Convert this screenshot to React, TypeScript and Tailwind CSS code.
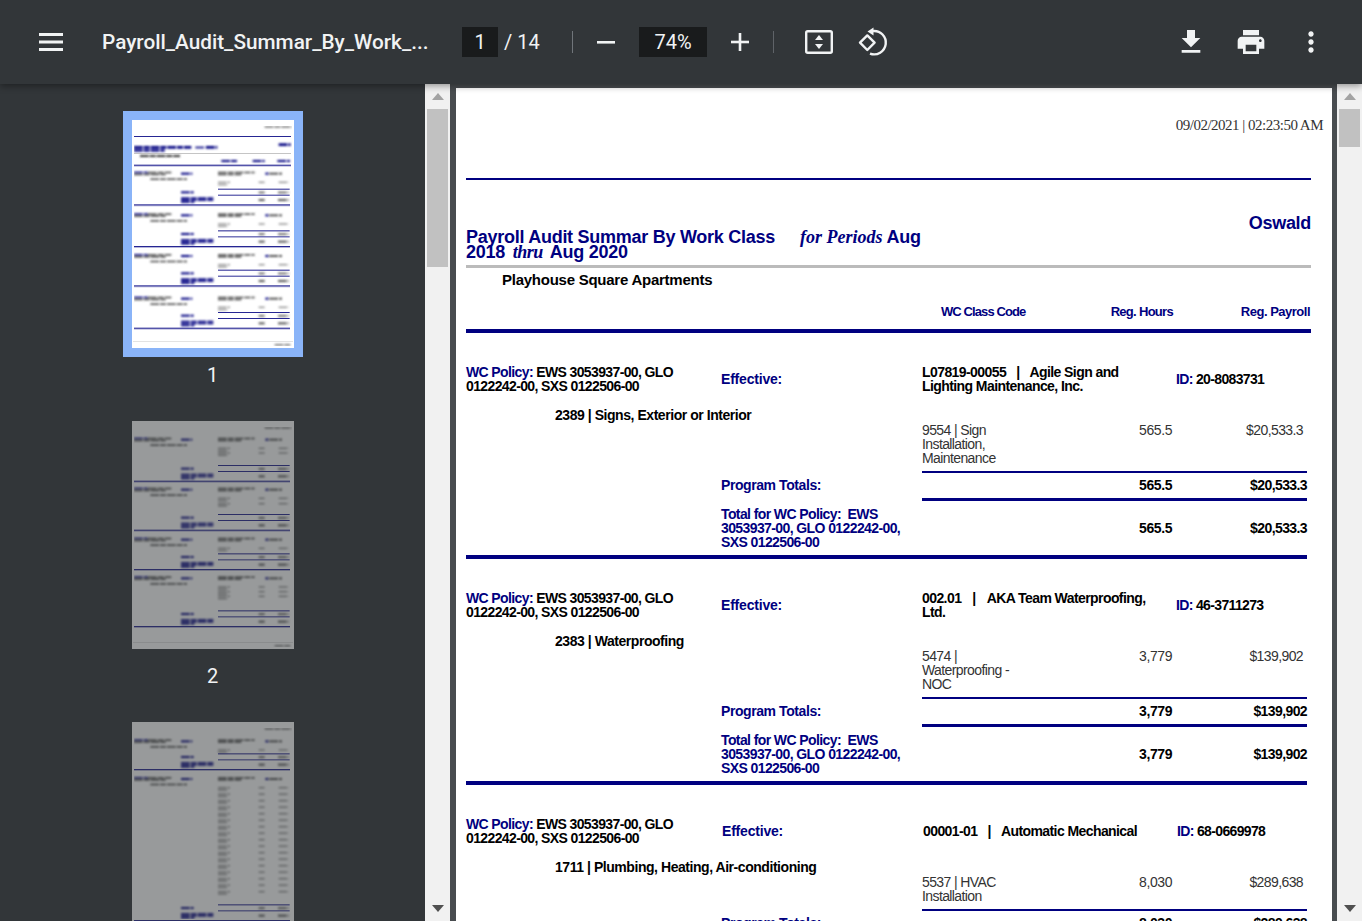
import React from "react";

const NAVY = "#000080";
type R = [number, number, number, number, string];

function sec(y: number, e: number, n = 1, p = 20): R[] {
  const t = "#555", b = "#000080", g = "#888";
  const out: R[] = [
    [6, y, 42, 5, b], [48, y, 70, 5, t], [6, y + 6, 95, 5, t],
    [147, y + 3, 34, 6, b],
    [258, y, 110, 5, t], [258, y + 6, 70, 5, t],
    [400, y + 3, 10, 6, b], [412, y + 3, 38, 6, t],
    [55, y + 20, 110, 5, t],
  ];
  for (let i = 0; i < n; i++) {
    const dy = y + 30 + i * p;
    out.push([258, dy, 36, 4, g], [258, dy + 7, 30, 4, g], [380, dy, 18, 4, g], [440, dy, 30, 4, g]);
  }
  out.push(
    [258, y + 51 + e, 215, 3, b],
    [147, y + 59 + e, 38, 6, b], [380, y + 60 + e, 18, 5, t], [438, y + 60 + e, 32, 5, t],
    [258, y + 69 + e, 215, 3, b],
    [147, y + 77 + e, 100, 5, b], [147, y + 83 + e, 100, 5, b], [147, y + 89 + e, 40, 5, b],
    [380, y + 82 + e, 18, 6, t], [438, y + 82 + e, 32, 6, t],
    [6, y + 98 + e, 468, 4, b],
  );
  return out;
}

const foot: R[] = [[3, 664, 480, 2, "#ccc"], [428, 672, 50, 5, "#777"]];
const date: R = [398, 18, 82, 5, "#777"];

const thumb1: R[] = [
  date, [6, 48, 471, 3, NAVY],
  [6, 78, 172, 8, NAVY], [190, 80, 30, 5, NAVY], [222, 78, 34, 8, NAVY], [6, 88, 92, 7, NAVY],
  [440, 70, 36, 8, NAVY], [6, 99, 471, 3, "#bbb"], [24, 105, 120, 6, "#333"],
  [268, 120, 48, 6, NAVY], [362, 120, 36, 6, NAVY], [436, 120, 38, 6, NAVY], [6, 134, 471, 4, NAVY],
  ...sec(155, 0), ...sec(280, 0), ...sec(402, -4), ...sec(530, -5), ...foot,
];
const thumb2: R[] = [date, ...sec(50, 31, 2, 14), ...sec(200, 28, 2, 16), ...sec(350, -4), ...sec(466, 51, 3, 14), ...foot];
const thumb3: R[] = [date, ...sec(52, -9), ...sec(165, 331, 17, 19.5)];

function splitWords(rects: R[]): R[] {
  const out: R[] = [];
  for (const r of rects) {
    if (r[2] < 26) {
      out.push(r);
      continue;
    }
    let x = r[0];
    const end = r[0] + r[2];
    let i = 0;
    while (x < end) {
      const w = Math.min(i % 2 ? 18 : 26, end - x);
      out.push([x, r[1], w, r[3], r[4]]);
      x += w + 3;
      i++;
    }
  }
  return out;
}

function Thumb({ rects, n, selected, fid }: { rects: R[]; n: number; selected?: boolean; fid: string }) {
  const lines = rects.filter((r) => r[2] >= 200);
  const words = splitWords(rects.filter((r) => r[2] < 200));
  return (
    <div className="flex flex-col items-center">
      <div className={selected ? "p-[9px] bg-[#8ab4f8]" : "p-[9px]"}>
        <svg viewBox="0 0 486 684" className={selected ? "block w-[162px] h-[228px] bg-white" : "block w-[162px] h-[228px] bg-white opacity-50"}>
          <defs>
            <filter id={fid} x="0" y="0" width="100%" height="100%">
              <feGaussianBlur stdDeviation="2.4" />
            </filter>
            <filter id={`${fid}l`} x="-5%" y="-5%" width="110%" height="110%">
              <feGaussianBlur stdDeviation="0.9" />
            </filter>
          </defs>
          <g filter={`url(#${fid})`}>
            {words.map((r, i) => (
              <rect key={i} x={r[0]} y={r[1]} width={r[2]} height={r[3]} fill={r[4]} />
            ))}
          </g>
          <g filter={`url(#${fid}l)`}>
            {lines.map((r, i) => (
              <rect key={i} x={r[0]} y={r[1]} width={r[2]} height={r[3]} fill={r[4]} opacity={0.85} />
            ))}
          </g>
        </svg>
      </div>
      <div className="h-[36px] mb-[19px] flex items-center text-[20px] leading-none text-[#f1f3f4]">{n}</div>
    </div>
  );
}

function Arrow({ up, dark }: { up?: boolean; dark?: boolean }) {
  return (
    <svg width="12" height="7" viewBox="0 0 12 7" className="block">
      <polygon points={up ? "6,0 12,7 0,7" : "0,0 12,0 6,7"} fill={dark ? "#505050" : "#a3a3a3"} />
    </svg>
  );
}

function Scrollbar({ thumbH }: { thumbH: string }) {
  return (
    <div className="w-[25px] shrink-0 bg-[#f1f1f1] flex flex-col items-center">
      <div className="h-[25px] w-full flex items-center justify-center"><Arrow up /></div>
      <div className={`w-[21px] bg-[#c1c1c1] ${thumbH}`} />
      <div className="mt-auto h-[26px] w-full flex items-center justify-center"><Arrow dark /></div>
    </div>
  );
}

function Ic({ d, className }: { d: string; className?: string }) {
  return (
    <svg width="32" height="32" viewBox="0 0 24 24" fill="#f1f3f4" className={className}>
      <path d={d} />
    </svg>
  );
}

function Toolbar() {
  return (
    <div className="relative z-10 h-[84px] shrink-0 bg-[#323639] shadow-[0_2px_7px_rgba(0,0,0,0.4)] flex items-center text-[#f1f3f4] font-['Roboto',sans-serif]">
      <svg width="24" height="18" viewBox="0 0 24 18" className="ml-[39px]" fill="#f1f3f4">
        <rect y="0" width="24" height="3" /><rect y="7.5" width="24" height="3" /><rect y="15" width="24" height="3" />
      </svg>
      <div className="ml-[39px] w-[360px] pt-[2px] text-[20.75px] font-medium whitespace-nowrap">Payroll_Audit_Summar_By_Work_...</div>
      <div className="w-[36px] h-[30px] bg-[#191b1c] flex items-center justify-center text-[20px]">1</div>
      <div className="ml-[6px] w-[36px] text-[20px] whitespace-nowrap">/ 14</div>
      <div className="ml-[32px] w-px h-[22px] bg-[#70757a]" />
      <svg width="18" height="3" viewBox="0 0 18 3" className="ml-[24px]" fill="#f1f3f4"><rect width="18" height="2.6" /></svg>
      <div className="ml-[24px] w-[68px] h-[30px] bg-[#191b1c] flex items-center justify-center text-[20px]">74%</div>
      <svg width="18" height="18" viewBox="0 0 18 18" className="ml-[24px]" fill="#f1f3f4">
        <rect y="7.7" width="18" height="2.6" /><rect x="7.7" width="2.6" height="18" />
      </svg>
      <div className="ml-[24px] w-px h-[22px] bg-[#5f6368]" />
      <svg width="28" height="24" viewBox="0 0 28 24" className="ml-[31px]">
        <rect x="1.2" y="1.2" width="25.6" height="21.6" rx="1.5" fill="none" stroke="#f1f3f4" strokeWidth="2.4" />
        <polygon points="14,5 18,10 10,10" fill="#f1f3f4" />
        <polygon points="14,19 18,14 10,14" fill="#f1f3f4" />
      </svg>
      <svg width="32" height="32" viewBox="0 0 32 32" className="ml-[25px]" fill="none" stroke="#f1f3f4" strokeWidth="2.4">
        <polygon points="9.3,9.4 16.6,16.7 9.3,24 2,16.7" strokeLinejoin="round" />
        <path d="M15 5 A11.7 11.7 0 1 1 12 27.6" />
        <polygon points="9.5,5.5 15.5,1.5 15.5,9.5" fill="#f1f3f4" stroke="none" />
      </svg>
      <Ic className="ml-auto" d="M19 9h-4V3H9v6H5l7 7 7-7zM5 18v2h14v-2H5z" />
      <Ic className="ml-[28px]" d="M19 8H5c-1.66 0-3 1.34-3 3v6h4v4h12v-4h4v-6c0-1.66-1.34-3-3-3zm-3 11H8v-5h8v5zm3-7c-.55 0-1-.45-1-1s.45-1 1-1 1 .45 1 1-.45 1-1 1zm-1-9H6v4h12V3z" />
      <Ic className="ml-[28px] mr-[35px]" d="M12 8c1.1 0 2-.9 2-2s-.9-2-2-2-2 .9-2 2 .9 2 2 2zm0 2c-1.1 0-2 .9-2 2s.9 2 2 2 2-.9 2-2-.9-2-2-2zm0 6c-1.1 0-2 .9-2 2s.9 2 2 2 2-.9 2-2-.9-2-2-2z" />
    </div>
  );
}

type SectionProps = {
  code: React.ReactNode;
  id: string;
  sub: string;
  detail: React.ReactNode;
  hours: string;
  pay: string;
  shift?: boolean;
};

function Section({ code, id, sub, detail, hours, pay, shift }: SectionProps) {
  const col2 = shift ? "w-[201px] ml-px" : "w-[201px]";
  return (
    <div className="w-[841px] text-[14px] leading-[14px] tracking-[-0.42px] font-bold text-black mb-[32px]">
      <div className="flex items-center min-h-[28px]">
        <div className="w-[255px] shrink-0 tracking-[-0.62px]"><span className="text-[#000080]">WC Policy:</span> EWS 3053937-00, GLO 0122242-00, SXS 0122506-00</div>
        <div className={`${col2} shrink-0 text-[#000080] tracking-[-0.2px]`}>Effective:</div>
        <div className="w-[254px] shrink-0 pr-[20px] tracking-[-0.58px]">{code}</div>
        <div className="flex-1 whitespace-nowrap tracking-[-0.65px]"><span className="text-[#000080]">ID:</span> {id}</div>
      </div>
      <div className="mt-[15px] pl-[89px] tracking-[-0.45px]">{sub}</div>
      <div className="mt-[1px] ml-[456px] flex font-normal text-[#333]">
        <div className="w-[100px] tracking-[-0.6px]">{detail}</div>
        <div className="w-[150px] text-right">{hours}</div>
        <div className="w-[131px] text-right tracking-[-0.6px]">{pay}</div>
      </div>
      <div className="mt-[6px] ml-[456px] h-[2px] bg-[#000080]" />
      <div className="mt-[5px] flex">
        <div className="ml-[255px] w-[201px] text-[#000080]">Program Totals:</div>
        <div className="w-[250px] text-right">{hours}</div>
        <div className="flex-1 text-right tracking-[-0.6px]">{pay}</div>
      </div>
      <div className="mt-[6px] ml-[456px] h-[3px] bg-[#000080]" />
      <div className="mt-[6px] flex items-center">
        <div className="ml-[255px] w-[201px] text-[#000080] tracking-[-0.6px]">Total for WC Policy:&nbsp; EWS 3053937-00, GLO 0122242-00, SXS 0122506-00</div>
        <div className="w-[250px] text-right">{hours}</div>
        <div className="flex-1 text-right tracking-[-0.6px]">{pay}</div>
      </div>
      <div className="mt-[6px] h-[4px] bg-[#000080]" />
    </div>
  );
}

function Page() {
  return (
    <div className="w-[876px] shrink-0 bg-white h-[900px] overflow-hidden font-['Liberation_Sans',Arial,sans-serif]">
      <div className="pl-[10px] pr-[21px]">
        <div className="pt-[28px] -mr-[12px] text-right font-['Liberation_Serif',serif] text-[15px] leading-[18px] tracking-[-0.5px] text-[#333]">09/02/2021 | 02:23:50 AM</div>
        <div className="mt-[44px] h-[2px] bg-[#000080]" />
        <div className="mt-[32px] flex justify-between text-[#000080] font-bold">
          <div className="mt-[18px] text-[18px] leading-[15px] tracking-[-0.27px] whitespace-nowrap">
            Payroll Audit Summar By Work Class<span className="ml-[25px] font-['Liberation_Serif',serif] italic text-[18px] tracking-[0px]">for Periods</span> Aug
            <br />
            2018 <span className="mx-[3px] font-['Liberation_Serif',serif] italic text-[18px] tracking-[-0.5px]">thru</span> Aug 2020
          </div>
          <div className="text-[18px] leading-[20px] tracking-[-0.3px] mt-[1px]">Oswald</div>
        </div>
        <div className="mt-[5px] h-[3px] bg-[#bbbbbb]" />
        <div className="mt-[3px] pl-[36px] text-[15px] leading-[18px] font-bold text-black tracking-[-0.25px]">Playhouse Square Apartments</div>
        <div className="mt-[16px] flex text-[13px] leading-[14px] font-bold text-[#000080] tracking-[-0.7px]">
          <div className="ml-[475px] w-[85px] whitespace-nowrap tracking-[-0.9px]">WC Class Code</div>
          <div className="w-[147px] text-right">Reg. Hours</div>
          <div className="flex-1 text-right tracking-[-0.5px] pr-[1px]">Reg. Payroll</div>
        </div>
        <div className="mt-[10px] h-[4px] bg-[#000080]" />
      </div>
      <div className="pl-[10px] pt-[32px]">
        <Section
          code={<>L07819-00055<span className="mx-[10px]">|</span>Agile Sign and Lighting Maintenance, Inc.</>}
          id="20-8083731"
          sub="2389 | Signs, Exterior or Interior"
          detail={<>9554 | Sign Installation, Maintenance</>}
          hours="565.5"
          pay="$20,533.3"
        />
        <Section
          code={<>002.01<span className="mx-[11px]">|</span>AKA Team Waterproofing, Ltd.</>}
          id="46-3711273"
          sub="2383 | Waterproofing"
          detail={<>5474 | Waterproofing - NOC</>}
          hours="3,779"
          pay="$139,902"
        />
        <Section
          shift
          code={<>00001-01<span className="mx-[10px]">|</span>Automatic Mechanical</>}
          id="68-0669978"
          sub="1711 | Plumbing, Heating, Air-conditioning"
          detail={<>5537 | HVAC Installation</>}
          hours="8,030"
          pay="$289,638"
        />
      </div>
    </div>
  );
}

export default function App() {
  return (
    <div className="w-[1362px] h-[921px] overflow-hidden flex flex-col bg-[#323639]">
      <Toolbar />
      <div className="flex flex-1 min-h-0">
        <div className="w-[425px] shrink-0 pt-[27px] flex flex-col items-center overflow-hidden font-['Roboto',sans-serif]">
          <Thumb rects={thumb1} n={1} selected fid="t1" />
          <Thumb rects={thumb2} n={2} fid="t2" />
          <Thumb rects={thumb3} n={3} fid="t3" />
        </div>
        <Scrollbar thumbH="h-[158px]" />
        <div className="flex-1 bg-[#484c4f] pt-[4px] pl-[6px] overflow-hidden flex">
          <Page />
        </div>
        <Scrollbar thumbH="h-[38px]" />
      </div>
    </div>
  );
}
